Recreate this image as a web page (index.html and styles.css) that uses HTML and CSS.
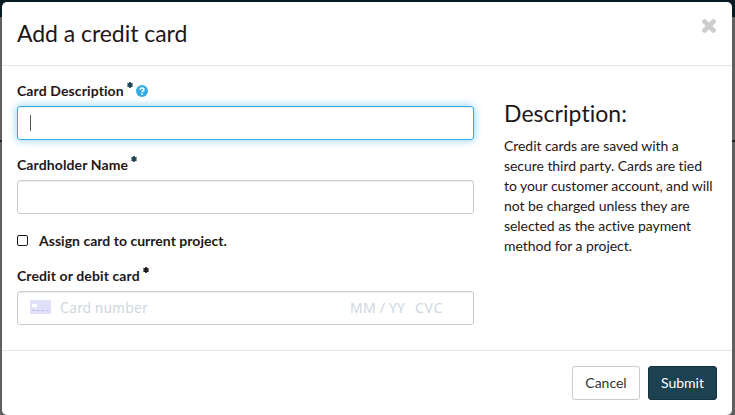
FILE: index.html
```html
<!DOCTYPE html>
<html lang="en">
<head>
<meta charset="utf-8">
<title>Add a credit card</title>
<link rel="stylesheet" href="styles.css">
</head>
<body>
<div class="modal">
  <header class="modal-header">
    <h1>Add a credit card</h1>
    <svg class="close" viewBox="0 0 14 14"><path d="M2.6 2.6L11.4 11.4M11.4 2.6L2.6 11.4"/></svg>
  </header>
  <main class="modal-body">
    <form class="form">
      <div class="label">Card Description<svg class="star" viewBox="0 0 6 6"><path d="M3 0V6M.4 1.5L5.6 4.5M5.6 1.5L.4 4.5"/></svg><svg class="help" viewBox="0 0 12 12"><circle cx="6" cy="6" r="6"/><path d="M4.1 4.6C4.2 2.4 7.9 2.5 7.9 4.6C7.9 5.8 6.1 5.7 6.1 7.2M6.1 8.2V9.8"/></svg></div>
      <div class="field focused"><span class="caret"></span></div>
      <div class="label">Cardholder Name<svg class="star" viewBox="0 0 6 6"><path d="M3 0V6M.4 1.5L5.6 4.5M5.6 1.5L.4 4.5"/></svg></div>
      <div class="field"></div>
      <div class="check"><span class="box"></span>Assign card to current project.</div>
      <div class="label">Credit or debit card<svg class="star dark" viewBox="0 0 6 6"><path d="M3 0V6M.4 1.5L5.6 4.5M5.6 1.5L.4 4.5"/></svg></div>
      <div class="field card">
        <svg class="card-icon" viewBox="0 0 21 14"><rect width="21" height="14" rx="1.5" fill="#e0e0fa"/><rect x="2" y="4" width="5" height="3.5" rx=".5" fill="#fff"/><path d="M2 10.5H19" stroke="#c2c2ee" stroke-dasharray="3.5 1"/></svg>
        <span class="number">Card number</span><span class="expiry">MM / YY</span><span class="cvc">CVC</span>
      </div>
    </form>
    <aside class="info">
      <h2>Description:</h2>
      <p>Credit cards are saved with a secure third party. Cards are tied to your customer account, and will not be charged unless they are selected as the active payment method for a project.</p>
    </aside>
  </main>
  <footer class="modal-footer">
    <button class="btn cancel">Cancel</button>
    <button class="btn submit">Submit</button>
  </footer>
</div>
</body>
</html>
```
FILE: styles.css
```css
* { box-sizing: border-box; }
body {
  margin: 0;
  height: 415px;
  overflow: hidden;
  padding: 2px 3px 0 2px;
  font: 14px/20px Lato, sans-serif;
  color: #1e1719;
  background: linear-gradient(#071b23 0 17px, #606060 17px 140px, #222 140px 142px, #606060 142px);
}
.modal { height: 413px; background: #fff; border-radius: 5px; }
.modal-header {
  height: 64px;
  padding: 15px;
  display: flex;
  justify-content: space-between;
  border-bottom: 1px solid #e5e5e5;
}
h1, h2 { margin: 0; font-weight: 400; font-size: 23px; line-height: 33px; }
h1 { letter-spacing: -.05px; }
h2 { letter-spacing: .05px; }
.close { width: 14px; height: 14px; margin-top: 2px; margin-right: 1px; }
.close path { stroke: #ccc; stroke-width: 4.8; stroke-linecap: round; }
.modal-body { height: 284px; padding: 15px; display: flex; gap: 30px; }
.form { width: 457px; }
.label { display: flex; height: 20px; margin-bottom: 5px; font-weight: 700; letter-spacing: .11px; }
.star { width: 6px; height: 6px; margin: 1px 0 0 3px; }
.star path { fill: none; stroke: #1c4352; stroke-width: 1.7; }
.star.dark path { stroke: #1e1719; }
.help { width: 12px; height: 12px; margin: 4px 0 0 3px; }
.help circle { fill: #35abe2; }
.help path { fill: none; stroke: #fff; stroke-width: 1.7; }
.field {
  height: 34px;
  margin-bottom: 15px;
  padding: 0 12px;
  display: flex;
  align-items: center;
  border: 1px solid #ccc;
  border-radius: 3px;
  box-shadow: inset 0 1px 1px rgba(0,0,0,.075);
}
.focused { border-color: #35abe2; box-shadow: inset 0 1px 1px rgba(0,0,0,.075), 0 0 8px rgba(53,171,226,.6); }
.caret { width: 1px; height: 16px; background: #555; }
.check { display: flex; align-items: center; height: 20px; margin: 17px 0 15px; font-weight: 700; letter-spacing: .02px; }
.box { width: 11px; height: 11px; margin: -1px 11px 0 0; border: 1px solid #1e1719; border-radius: 2px; }
.card { font-family: "Noto Sans", sans-serif; color: #cfd7df; }
.card-icon { width: 21px; height: 14px; margin: -2px 9px 0 0; }
.number { width: 290px; margin-top: -2px; font-family: "Noto Sans CJK SC", sans-serif; letter-spacing: .16px; }
.expiry { width: 65px; letter-spacing: .2px; }
.cvc { letter-spacing: .7px; }
.info { width: 212px; padding-top: 16px; }
.info p { margin: 6px 0 0; letter-spacing: -.05px; }
.modal-footer { height: 65px; padding: 15px; display: flex; justify-content: flex-end; gap: 8px; border-top: 1px solid #e5e5e5; }
.btn { height: 34px; padding: 0; border: 1px solid #ccc; border-radius: 3px; font: 14px/20px Lato, sans-serif; }
.cancel { width: 68px; background: #fff; color: #333; }
.submit { width: 69px; background: #1c4150; border-color: #16323e; color: #fff; }
```
